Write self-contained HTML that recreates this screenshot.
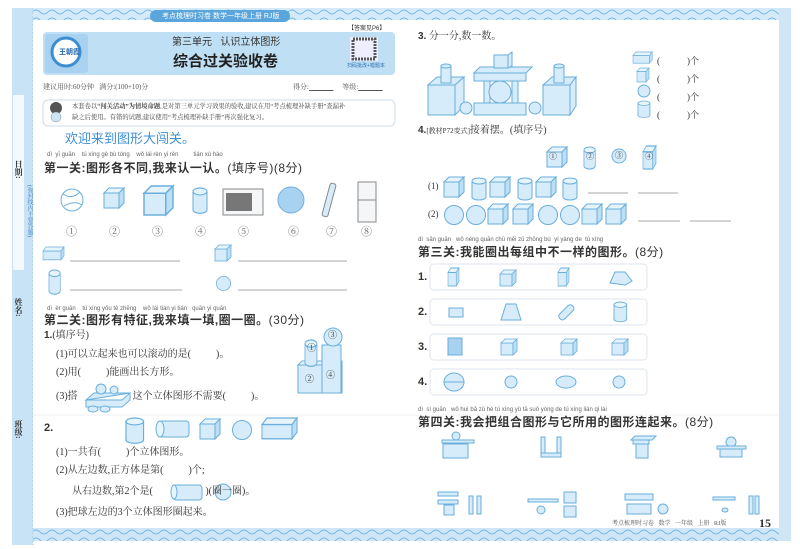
<!DOCTYPE html>
<html><head><meta charset="utf-8">
<style>
*{margin:0;padding:0;box-sizing:border-box}
body{width:800px;height:549px;background:#fff;position:relative;overflow:hidden;font-family:"Liberation Serif","Noto Serif CJK SC","Noto Sans CJK SC",serif;color:#333}
.t{position:absolute;white-space:nowrap;font-size:11px;line-height:1}
.h{font-family:"Liberation Sans","Noto Sans CJK SC",sans-serif;font-weight:bold;font-size:12px;color:#333;letter-spacing:0.5px}
.py{font-family:"Liberation Sans",sans-serif;font-size:6px;color:#666}
.s{font-family:"Liberation Sans","Noto Sans CJK SC",sans-serif}
svg{position:absolute;left:0;top:0}
</style></head><body>
<svg width="800" height="549" viewBox="0 0 800 549">
<defs>
<g id="cube"><rect x="0" y="5" width="15" height="15" fill="#d6ecfa" stroke="#6aaedb" stroke-width="1"/><polygon points="0,5 5,0 20,0 15,5" fill="#e6f4fc" stroke="#6aaedb"/><polygon points="15,5 20,0 20,15 15,20" fill="#bcdff5" stroke="#6aaedb"/></g>
<g id="cyl"><rect x="0" y="3" width="14" height="16" fill="#d6ecfa" stroke="#6aaedb"/><ellipse cx="7" cy="19" rx="7" ry="3" fill="#d6ecfa" stroke="#6aaedb"/><rect x="0.5" y="3" width="13" height="16" fill="#d6ecfa"/><ellipse cx="7" cy="3" rx="7" ry="3" fill="#e6f4fc" stroke="#6aaedb"/></g>
<g id="ball"><circle cx="10" cy="10" r="9.5" fill="#d6ecfa" stroke="#6aaedb"/></g>
<g id="box"><rect x="0" y="5" width="30" height="11" fill="#d6ecfa" stroke="#6aaedb"/><polygon points="0,5 5,0 35,0 30,5" fill="#e6f4fc" stroke="#6aaedb"/><polygon points="30,5 35,0 35,11 30,16" fill="#bcdff5" stroke="#6aaedb"/></g>
<pattern id="wave" width="16" height="8" patternUnits="userSpaceOnUse"><path d="M0 4 Q4 0 8 4 T16 4" fill="none" stroke="#7cbbe6" stroke-width="1"/></pattern>
</defs>
<rect x="12" y="8" width="21" height="537" fill="#c9e3f6"/>
<rect x="13" y="95" width="11" height="175" fill="#f4f9fd"/>
<line x1="33" y1="8" x2="33" y2="545" stroke="#9cc9ea" stroke-dasharray="2 2"/>
<rect x="33" y="8" width="757" height="12" fill="#d5eaf8"/>
<rect x="33" y="8" width="757" height="12" fill="url(#wave)"/>
<rect x="33" y="528" width="757" height="13" fill="#cfe6f7"/>
<rect x="33" y="528" width="757" height="13" fill="url(#wave)"/>
<rect x="779" y="8" width="12" height="533" fill="#cfe6f7"/>
<rect x="33" y="20" width="746" height="508" fill="#fff"/>
<rect x="150" y="10" width="140" height="12" rx="6" fill="#5aa5dc"/>
<rect x="43" y="32" width="352" height="43" rx="4" fill="#bfdff5"/>
<rect x="45" y="34" width="43" height="39" rx="3" fill="#a9d2f0"/>
<circle cx="66" cy="52" r="14" fill="#fff" stroke="#3c8ed0" stroke-width="3"/>
<rect x="350" y="37" width="28" height="24" fill="#eef"/>
<rect x="353" y="39" width="22" height="20" fill="none" stroke="#555" stroke-width="3" stroke-dasharray="2 1"/>
<rect x="43" y="100" width="352" height="26" rx="5" fill="#fff" stroke="#ccdde8"/>
<circle cx="56" cy="108" r="6" fill="#555"/><circle cx="56" cy="117" r="5" fill="#cce5f7" stroke="#888" stroke-width=".5"/>
<circle cx="72" cy="200" r="11" fill="#fff" stroke="#6aaedb"/><path d="M63 194 Q72 200 80 192 M64 206 Q74 200 82 205" stroke="#6aaedb" fill="none"/>
<use href="#cube" x="104" y="188"/>
<g transform="translate(144,186) scale(1.45)"><use href="#cube"/></g>
<g transform="translate(193,188) scale(1,1.15)"><use href="#cyl"/></g>
<rect x="223" y="189" width="40" height="26" fill="#f4f6f8" stroke="#888"/><rect x="226" y="193" width="26" height="18" fill="#777"/>
<circle cx="291" cy="200" r="13" fill="#a9d2f0" stroke="#6aaedb"/>
<rect x="326" y="183" width="6" height="34" rx="2" fill="#d6ecfa" stroke="#888" transform="rotate(15 329 200)"/>
<rect x="358" y="182" width="18" height="40" fill="#f4f6f8" stroke="#888"/><line x1="358" y1="200" x2="376" y2="200" stroke="#888"/>
<g transform="translate(43,247)"><use href="#box" transform="scale(0.6,0.8)"/></g>
<line x1="70" y1="261" x2="180" y2="261" stroke="#aaa"/>
<g transform="translate(215,245) scale(.8)"><use href="#cube"/></g>
<line x1="238" y1="261" x2="347" y2="261" stroke="#aaa"/>
<g transform="translate(49,270) scale(.8,1.1)"><use href="#cyl"/></g>
<line x1="70" y1="290" x2="182" y2="290" stroke="#aaa"/>
<g transform="translate(216,276) scale(.75)"><use href="#ball"/></g>
<line x1="238" y1="290" x2="347" y2="290" stroke="#aaa"/>
<rect x="298" y="365" width="24" height="28" fill="#d6ecfa" stroke="#6aaedb"/><polygon points="298,365 302,361 326,361 322,365" fill="#e6f4fc" stroke="#6aaedb"/>
<rect x="322" y="361" width="20" height="32" fill="#d6ecfa" stroke="#6aaedb"/>
<rect x="322" y="345" width="19" height="48" fill="#d6ecfa" stroke="#6aaedb"/>
<g transform="translate(305,340) scale(.85,1.2)"><use href="#cyl"/></g>
<circle cx="333" cy="337" r="9" fill="#d6ecfa" stroke="#6aaedb"/>
<polygon points="86,400 94,393 130,393 122,400 86,400 86,407 122,407 130,400 130,393" fill="#d6ecfa" stroke="#6aaedb"/>
<circle cx="101" cy="389" r="5" fill="#d6ecfa" stroke="#6aaedb"/><circle cx="114" cy="390" r="4" fill="#d6ecfa" stroke="#6aaedb"/>
<ellipse cx="93" cy="409" rx="5" ry="3" fill="#d6ecfa" stroke="#6aaedb"/><ellipse cx="105" cy="409" rx="5" ry="3" fill="#d6ecfa" stroke="#6aaedb"/>
<line x1="33" y1="415" x2="779" y2="415" stroke="#eef2f5"/>
<g transform="translate(126,418) scale(1.25,1.15)"><use href="#cyl"/></g>
<rect x="159" y="421" width="30" height="16" rx="3" fill="#d6ecfa" stroke="#6aaedb"/><ellipse cx="160" cy="429" rx="4" ry="8" fill="#e6f4fc" stroke="#6aaedb"/>
<g transform="translate(200,419)"><use href="#cube"/></g>
<g transform="translate(232,420)"><use href="#ball"/></g>
<g transform="translate(262,418) scale(1,1.3)"><use href="#box"/></g>
<rect x="173" y="485" width="29" height="15" rx="3" fill="#d6ecfa" stroke="#6aaedb"/><ellipse cx="174" cy="492" rx="3" ry="7" fill="#e6f4fc" stroke="#6aaedb"/>
<circle cx="223" cy="492" r="8" fill="#d6ecfa" stroke="#6aaedb"/>
<g fill="#d6ecfa" stroke="#6aaedb">
<rect x="428" y="85" width="27" height="30"/><polygon points="428,85 437,77 464,77 455,85"/><polygon points="455,85 464,77 464,106 455,115"/>
<rect x="441" y="66" width="10" height="17"/><ellipse cx="446" cy="66" rx="5" ry="2"/>
<rect x="474" y="73" width="52" height="8"/><polygon points="474,73 480,67 532,67 526,73"/>
<rect x="494" y="55" width="14" height="13"/><polygon points="508,55 512,52 512,66 508,68"/>
<rect x="484" y="81" width="6" height="22"/><rect x="512" y="81" width="6" height="22"/>
<circle cx="500" cy="92" r="11"/>
<rect x="474" y="103" width="52" height="12"/>
<circle cx="466" cy="108" r="6"/><circle cx="535" cy="108" r="6"/>
<rect x="543" y="85" width="27" height="30"/><polygon points="543,85 552,77 576,77 570,85"/><polygon points="570,85 576,77 576,106 570,115"/>
<rect x="554" y="66" width="10" height="17"/><ellipse cx="559" cy="66" rx="5" ry="2"/>
</g>
<g transform="translate(633,52) scale(.55,.7)"><use href="#box"/></g>
<g transform="translate(637,68) scale(.6,.7)"><use href="#cube"/></g>
<circle cx="644" cy="91" r="6" fill="#d6ecfa" stroke="#6aaedb"/>
<g transform="translate(638,101) scale(.85,.75)"><use href="#cyl"/></g>
<g transform="translate(547,147)"><use href="#cube"/></g>
<g transform="translate(584,147) scale(.8,1)"><use href="#cyl"/></g>
<circle cx="619" cy="156" r="7" fill="#d6ecfa" stroke="#6aaedb"/>
<g transform="translate(643,146) scale(.65,1.15)"><use href="#cube"/></g>
<use href="#cube" x="444" y="177"/><use href="#cyl" x="472" y="178"/><use href="#cube" x="490" y="177"/><use href="#cyl" x="518" y="178"/><use href="#cube" x="536" y="177"/><use href="#cyl" x="563" y="178"/>
<use href="#ball" x="444" y="205"/><use href="#ball" x="466" y="205"/><use href="#cube" x="488" y="204"/><use href="#cube" x="513" y="204"/><use href="#ball" x="538" y="205"/><use href="#ball" x="560" y="205"/><use href="#cube" x="582" y="204"/><use href="#cube" x="606" y="204"/>
<line x1="588" y1="193" x2="628" y2="193" stroke="#aaa"/><line x1="638" y1="193" x2="678" y2="193" stroke="#aaa"/>
<line x1="638" y1="221" x2="680" y2="221" stroke="#aaa"/><line x1="690" y1="221" x2="731" y2="221" stroke="#aaa"/>
<g fill="#fff" stroke="#dde6ec"><rect x="430" y="264" width="217" height="26" rx="4"/><rect x="430" y="299" width="217" height="26" rx="4"/><rect x="430" y="334" width="217" height="26" rx="4"/><rect x="430" y="369" width="217" height="26" rx="4"/></g>
<g transform="translate(448,268) scale(.55,.9)"><use href="#cube"/></g>
<g transform="translate(500,270) scale(.8)"><use href="#cube"/></g>
<g transform="translate(558,268) scale(.55,.9)"><use href="#cube"/></g>
<polygon points="610,283 615,272 625,272 632,281 625,285" fill="#d6ecfa" stroke="#6aaedb"/>
<rect x="449" y="308" width="14" height="9" fill="#d6ecfa" stroke="#6aaedb"/>
<polygon points="506,304 516,304 521,320 501,320" fill="#d6ecfa" stroke="#6aaedb"/>
<rect x="563" y="303" width="7" height="18" rx="3" fill="#d6ecfa" stroke="#6aaedb" transform="rotate(45 566 312)"/>
<g transform="translate(614,302) scale(.9)"><use href="#cyl"/></g>
<rect x="448" y="338" width="14" height="17" fill="#a9d2f0" stroke="#6aaedb"/>
<g transform="translate(501,339) scale(.8)"><use href="#cube"/></g>
<g transform="translate(561,339) scale(.8)"><use href="#cube"/></g>
<g transform="translate(612,339) scale(.8)"><use href="#cube"/></g>
<ellipse cx="454" cy="382" rx="10" ry="9" fill="#d6ecfa" stroke="#6aaedb"/><line x1="444" y1="382" x2="464" y2="382" stroke="#6aaedb"/>
<circle cx="511" cy="382" r="6" fill="#d6ecfa" stroke="#6aaedb"/>
<ellipse cx="566" cy="382" rx="10" ry="6" fill="#d6ecfa" stroke="#6aaedb"/>
<circle cx="619" cy="382" r="6" fill="#d6ecfa" stroke="#6aaedb"/>
<g fill="#d6ecfa" stroke="#6aaedb">
<rect x="443" y="444" width="25" height="14"/><rect x="442" y="440" width="32" height="3"/><circle cx="456" cy="436" r="4"/>
<rect x="541" y="437" width="4" height="20"/><rect x="557" y="437" width="4" height="20"/><rect x="541" y="453" width="20" height="4"/>
<polygon points="631,440 635,436 656,436 652,440"/><rect x="633" y="440" width="16" height="4"/><rect x="636" y="444" width="12" height="14"/>
<circle cx="731" cy="442" r="5"/><rect x="717" y="446" width="29" height="3"/><rect x="720" y="449" width="22" height="8"/>
<rect x="438" y="492" width="20" height="4"/><rect x="438" y="500" width="20" height="4"/><rect x="444" y="505" width="10" height="10"/><rect x="469" y="496" width="4" height="18"/><rect x="477" y="496" width="4" height="18"/>
<rect x="528" y="499" width="30" height="3"/><circle cx="541" cy="510" r="4"/><rect x="564" y="492" width="12" height="11"/><rect x="564" y="506" width="12" height="11"/>
<rect x="625" y="494" width="28" height="6"/><rect x="627" y="504" width="24" height="10"/><circle cx="663" cy="509" r="5"/>
<rect x="713" y="497" width="22" height="3"/><ellipse cx="725" cy="510" rx="3" ry="2"/><rect x="749" y="496" width="4" height="18"/><rect x="755" y="496" width="4" height="18"/>
</g>
</svg>

<div class="t s" style="left:162px;top:13px;font-size:7px;color:#fff">考点梳理时习卷 数学一年级上册 RJ版</div>
<div class="t s" style="left:59px;top:49px;font-size:7px;color:#2a6db0;font-weight:bold">王朝霞</div>
<div class="t s" style="left:348px;top:26px;font-size:6px">【答案见P6】</div>
<div class="t s" style="left:347px;top:64px;font-size:5px;color:#2a6db0">扫码批改+错题本</div>
<div class="t s" style="left:172px;top:38px;font-size:10px;color:#333">第三单元&nbsp;&nbsp;&nbsp;认识立体图形</div>
<div class="t s" style="left:173px;top:54px;font-size:15px;font-weight:bold;color:#222">综合过关验收卷</div>
<div class="t" style="left:43px;top:84px;font-size:7px;color:#555">建议用时:60分钟&nbsp;&nbsp;&nbsp;满分:(100+10)分</div>
<div class="t" style="left:293px;top:84px;font-size:7px;color:#555">得分:<u>&nbsp;&nbsp;&nbsp;&nbsp;&nbsp;&nbsp;&nbsp;&nbsp;&nbsp;&nbsp;&nbsp;&nbsp;&nbsp;&nbsp;</u>&nbsp;&nbsp;&nbsp;&nbsp;&nbsp;等级:<u>&nbsp;&nbsp;&nbsp;&nbsp;&nbsp;&nbsp;&nbsp;&nbsp;&nbsp;&nbsp;&nbsp;&nbsp;&nbsp;&nbsp;</u></div>
<div class="t" style="left:72px;top:104px;font-size:6.3px;color:#444">本套卷以<b>“闯关活动”为情境命题</b>,是对第三单元学习效果的验收,建议在用“考点梳理补缺手册”查漏补</div>
<div class="t" style="left:72px;top:115px;font-size:6.3px;color:#444">缺之后使用。有错的试题,建议使用“考点梳理补缺手册”再次强化复习。</div>
<div class="t s" style="left:65px;top:132px;font-size:13px;color:#3d8fd6">欢迎来到图形大闯关。</div>
<div class="t py" style="left:47px;top:152px">dì&nbsp;&nbsp;yī guān&nbsp;&nbsp;&nbsp;&nbsp;tú xíng gè bù tóng&nbsp;&nbsp;&nbsp;&nbsp;wǒ lái rèn yi rèn&nbsp;&nbsp;&nbsp;&nbsp;&nbsp;&nbsp;&nbsp;&nbsp;&nbsp;tián xù hào</div>
<div class="t h" style="left:44px;top:162px">第一关:图形各不同,我来认一认。<span style="font-weight:normal">(填序号)(8分)</span></div>
<div class="t" style="left:66px;top:227px;font-size:11px;color:#666">①</div>
<div class="t" style="left:109px;top:227px;font-size:11px;color:#666">②</div>
<div class="t" style="left:152px;top:227px;font-size:11px;color:#666">③</div>
<div class="t" style="left:195px;top:227px;font-size:11px;color:#666">④</div>
<div class="t" style="left:238px;top:227px;font-size:11px;color:#666">⑤</div>
<div class="t" style="left:288px;top:227px;font-size:11px;color:#666">⑥</div>
<div class="t" style="left:326px;top:227px;font-size:11px;color:#666">⑦</div>
<div class="t" style="left:361px;top:227px;font-size:11px;color:#666">⑧</div>
<div class="t py" style="left:47px;top:306px">dì&nbsp;&nbsp;èr guān&nbsp;&nbsp;&nbsp;&nbsp;tú xíng yǒu tè zhēng&nbsp;&nbsp;&nbsp;&nbsp;wǒ lái tián yi tián&nbsp;&nbsp;&nbsp;quān yi quān</div>
<div class="t h" style="left:44px;top:314px">第二关:图形有特征,我来填一填,圈一圈。<span style="font-weight:normal">(30分)</span></div>
<div class="t" style="left:44px;top:331px;font-size:10px"><b class="s">1.</b>(填序号)</div>
<div class="t" style="left:56px;top:350px;font-size:10px">(1)可以立起来也可以滚动的是(&nbsp;&nbsp;&nbsp;&nbsp;&nbsp;&nbsp;&nbsp;&nbsp;&nbsp;&nbsp;)。</div>
<div class="t" style="left:56px;top:368px;font-size:10px">(2)用(&nbsp;&nbsp;&nbsp;&nbsp;&nbsp;&nbsp;&nbsp;&nbsp;&nbsp;&nbsp;)能画出长方形。</div>
<div class="t" style="left:56px;top:392px;font-size:10px">(3)搭&nbsp;&nbsp;&nbsp;&nbsp;&nbsp;&nbsp;&nbsp;&nbsp;&nbsp;&nbsp;&nbsp;&nbsp;&nbsp;&nbsp;&nbsp;&nbsp;&nbsp;&nbsp;&nbsp;&nbsp;&nbsp;&nbsp;这个立体图形不需要(&nbsp;&nbsp;&nbsp;&nbsp;&nbsp;&nbsp;&nbsp;&nbsp;&nbsp;&nbsp;)。</div>
<div class="t" style="left:307px;top:344px;font-size:9px">①</div><div class="t" style="left:328px;top:331px;font-size:9px">③</div>
<div class="t" style="left:305px;top:375px;font-size:9px">②</div><div class="t" style="left:326px;top:371px;font-size:9px">④</div>
<div class="t s" style="left:44px;top:423px;font-size:11px;font-weight:bold">2.</div>
<div class="t" style="left:56px;top:448px;font-size:10px">(1)一共有(&nbsp;&nbsp;&nbsp;&nbsp;&nbsp;&nbsp;&nbsp;&nbsp;&nbsp;&nbsp;)个立体图形。</div>
<div class="t" style="left:56px;top:466px;font-size:10px">(2)从左边数,正方体是第(&nbsp;&nbsp;&nbsp;&nbsp;&nbsp;&nbsp;&nbsp;&nbsp;&nbsp;&nbsp;)个;</div>
<div class="t" style="left:72px;top:487px;font-size:10px">从右边数,第2个是(&nbsp;&nbsp;&nbsp;&nbsp;&nbsp;&nbsp;&nbsp;&nbsp;&nbsp;&nbsp;&nbsp;&nbsp;&nbsp;&nbsp;&nbsp;&nbsp;&nbsp;&nbsp;&nbsp;&nbsp;&nbsp;)(圈一圈)。</div>
<div class="t" style="left:56px;top:508px;font-size:10px">(3)把球左边的3个立体图形圈起来。</div>
<div class="t" style="left:14px;top:160px;font-size:8px;font-weight:bold;writing-mode:vertical-rl">日期:</div>
<div class="t" style="left:26px;top:185px;font-size:6px;color:#3d7fc0;writing-mode:vertical-rl">(弥封线内不要答题)</div>
<div class="t" style="left:14px;top:298px;font-size:8px;font-weight:bold;writing-mode:vertical-rl">姓名:</div>
<div class="t" style="left:14px;top:420px;font-size:8px;font-weight:bold;writing-mode:vertical-rl">班级:</div>

<div class="t" style="left:418px;top:32px;font-size:10px"><b class="s">3.</b> 分一分,数一数。</div>
<div class="t" style="left:657px;top:52px;font-size:9px;line-height:18px">(&nbsp;&nbsp;&nbsp;&nbsp;&nbsp;&nbsp;&nbsp;&nbsp;&nbsp;&nbsp;&nbsp;&nbsp;)个<br>(&nbsp;&nbsp;&nbsp;&nbsp;&nbsp;&nbsp;&nbsp;&nbsp;&nbsp;&nbsp;&nbsp;&nbsp;)个<br>(&nbsp;&nbsp;&nbsp;&nbsp;&nbsp;&nbsp;&nbsp;&nbsp;&nbsp;&nbsp;&nbsp;&nbsp;)个<br>(&nbsp;&nbsp;&nbsp;&nbsp;&nbsp;&nbsp;&nbsp;&nbsp;&nbsp;&nbsp;&nbsp;&nbsp;)个</div>
<div class="t" style="left:418px;top:126px;font-size:10px"><b class="s">4.</b><span style="font-size:7px">[教材P72变式]</span>接着摆。(填序号)</div>
<div class="t" style="left:549px;top:153px;font-size:8px">①</div><div class="t" style="left:586px;top:153px;font-size:8px">②</div><div class="t" style="left:615px;top:152px;font-size:8px">③</div><div class="t" style="left:645px;top:153px;font-size:8px">④</div>
<div class="t" style="left:428px;top:182px;font-size:9px">(1)</div>
<div class="t" style="left:428px;top:210px;font-size:9px">(2)</div>
<div class="t py" style="left:418px;top:237px">dì&nbsp;&nbsp;sān guān&nbsp;&nbsp;&nbsp;wǒ néng quān chū měi zǔ zhōng bù&nbsp;&nbsp;yí yàng de&nbsp;&nbsp;tú xíng</div>
<div class="t h" style="left:418px;top:246px">第三关:我能圈出每组中不一样的图形。<span style="font-weight:normal">(8分)</span></div>
<div class="t s" style="left:418px;top:272px;font-size:11px;font-weight:bold">1.</div>
<div class="t s" style="left:418px;top:307px;font-size:11px;font-weight:bold">2.</div>
<div class="t s" style="left:418px;top:342px;font-size:11px;font-weight:bold">3.</div>
<div class="t s" style="left:418px;top:377px;font-size:11px;font-weight:bold">4.</div>
<div class="t py" style="left:418px;top:407px">dì&nbsp;&nbsp;sì guān&nbsp;&nbsp;&nbsp;wǒ huì bǎ zǔ hé tú xíng yǔ tā suǒ yòng de tú xíng lián qǐ lái</div>
<div class="t h" style="left:418px;top:416px">第四关:我会把组合图形与它所用的图形连起来。<span style="font-weight:normal">(8分)</span></div>
<div class="t" style="left:612px;top:521px;font-size:6px;color:#555">考点梳理时习卷&nbsp;&nbsp;&nbsp;数学&nbsp;&nbsp;&nbsp;一年级&nbsp;&nbsp;&nbsp;上册&nbsp;&nbsp;&nbsp;RJ版</div>
<div class="t" style="left:759px;top:517px;font-size:12px;font-weight:bold">15</div>
</body></html>
